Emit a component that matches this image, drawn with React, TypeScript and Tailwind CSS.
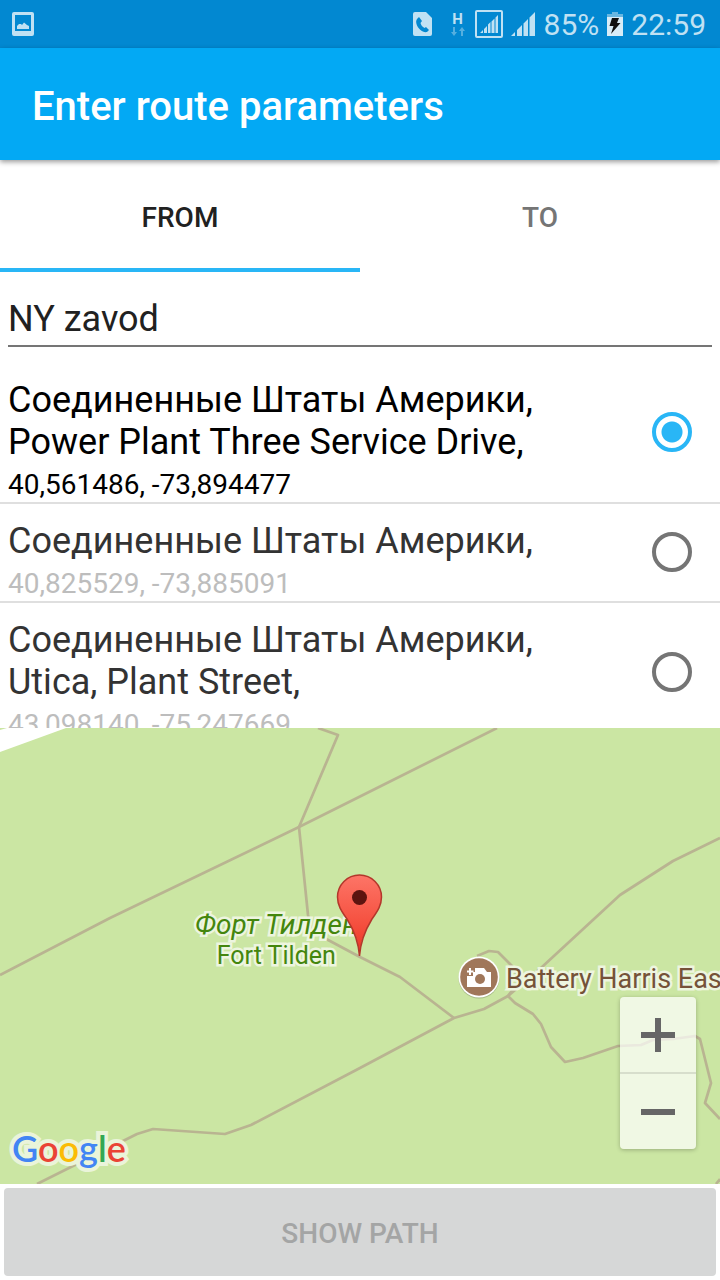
import { useState } from "react";

type Place = { lines: string[]; coords: string };

const PLACES: Place[] = [
  { lines: ["Соединенные Штаты Америки,", "Power Plant Three Service Drive,"], coords: "40,561486, -73,894477" },
  { lines: ["Соединенные Штаты Америки,"], coords: "40,825529, -73,885091" },
  { lines: ["Соединенные Штаты Америки,", "Utica, Plant Street,"], coords: "43,098140, -75,247669" },
];

function StatusBar() {
  return (
    <div className="flex h-12 shrink-0 items-center bg-[#0288d1] pr-3.5 pl-3 text-[30px] leading-none text-[#c0e1f3]">
      <svg width="22" height="24" viewBox="0 0 22 24" aria-hidden="true">
        <path fillRule="evenodd" fill="currentColor" d="M2 0h18a2 2 0 0 1 2 2v20a2 2 0 0 1-2 2H2a2 2 0 0 1-2-2V2a2 2 0 0 1 2-2zM3 3v16h16V3z" />
        <path fill="currentColor" d="M5 17v-3l2-2h2l1 1 2-2.500 3 2.500 2 1v3z" />
      </svg>
      <div className="flex-1" />
      <svg width="19" height="24" viewBox="0 0 19 24" aria-hidden="true">
        <path fill="currentColor" d="M2 0h11l6 6v16a2 2 0 0 1-2 2H2a2 2 0 0 1-2-2V2a2 2 0 0 1 2-2z" />
        <path fill="#0288d1" d="M4 7l2-2 3 4-1.500 2c.5 2 2 4 4 5l1.500-1 3 3-2 2c-4 1-9-3-10.500-8C3 10 3 8.500 4 7z" />
      </svg>
      <div className="ml-[19px] flex w-3.5 flex-col items-center">
        <span className="text-[15px] leading-[15px] font-bold">H</span>
        <svg width="14" height="9" viewBox="0 0 14 9" fill="#55afdf" aria-hidden="true">
          <path d="M2 0h2v5h2L3 9 0 5h2zM10 9h2V4h2l-3-4-3 4h2z" />
        </svg>
      </div>
      <svg className="ml-2.5" width="28" height="28" viewBox="0 0 28 28" aria-hidden="true">
        <rect x="1" y="1" width="26" height="26" rx="1" fill="none" stroke="currentColor" strokeWidth="2" />
        <path fill="currentColor" d="M5 23l3-3v3zM9 19l3-3v7H9zM13 14.500l2.500-2.500v11H13zM16.500 11.500l3-3V23h-3zM20.500 7.500l2.500-2.500v18h-2.500z" />
      </svg>
      <svg className="ml-2" width="25" height="24" viewBox="0 0 25 24" aria-hidden="true">
        <path fill="currentColor" d="M0 24l4-4v4zM6 18l5-5v11H6zM12.500 11.500L17 7v17h-4.500zM18.500 5.500L24 0v24h-5.500z" />
      </svg>
      <span className="ml-2 pt-0.5">85%</span>
      <svg className="ml-2" width="16" height="24" viewBox="0 0 16 24" aria-hidden="true">
        <path fill="#68b7e1" d="M5 0h6v2h5v3H0V2h5z" />
        <path fill="#d8ecf7" d="M0 5h16v19H0z" />
        <path fill="#111" d="M5 6h7l-2 5h3.500L4 22l2.500-8H2.500z" />
      </svg>
      <span className="ml-2 pt-0.5">22:59</span>
    </div>
  );
}

function MapView() {
  return (
    <section aria-label="Map" className="relative min-h-0 flex-1 overflow-hidden bg-[#cbe6a3]">
      <svg className="block h-full w-full" viewBox="0 0 720 456" preserveAspectRatio="xMidYMid slice" aria-hidden="true">
        <path fill="#fff" d="M0 2L7 0h59L0 24z" />
        <g fill="none" stroke="#b9b491" strokeWidth="2.700" strokeLinejoin="round">
          <path d="M0 247L110 190 299 99 381 58 497 0" />
          <path d="M318 0L338 7 299 99 308 187 311 203 330 213 360 229 400 249 454 290" />
          <path d="M37 456L137 406 153 401 225 406 251 397 360 340 454 290 484 281 508 268 542 239 620 167 673 133 720 110" />
          <path d="M477 228L489 223 498 224 512 238 520 252 508 268 515 275 533 286 541 296 551 319 565 334 583 330 618 318 641 317 653 312 673 311 695 308 700 311 711 355 705 375 720 391" />
          <path d="M716 456L720 451" />
        </g>
      </svg>

      <div className="absolute top-[182px] left-[195px] flex flex-col items-center whitespace-nowrap text-[#44860d] [-webkit-text-stroke:5px_#edf5df] [paint-order:stroke_fill]">
        <span className="text-[28px] leading-[30px] italic">Форт Тилден</span>
        <span className="text-[25px] leading-[32px]">Fort Tilden</span>
      </div>

      <svg className="absolute top-[146px] left-[336px]" width="47" height="84" viewBox="0 0 47 84" aria-hidden="true">
        <defs>
          <linearGradient id="pin" x1="0" y1="0" x2="0" y2="1">
            <stop offset="0" stopColor="#fd7567" />
            <stop offset="0.600" stopColor="#f5503f" />
            <stop offset="1" stopColor="#ea3324" />
          </linearGradient>
        </defs>
        <path
          fill="url(#pin)"
          stroke="#b3372b"
          strokeWidth="1.500"
          d="M23.500 82C22.500 68 19 58 11 45 5 36.500 1.500 31 1.500 23a22 22 0 0 1 44 0c0 8-3.500 13.500-9.500 22-8 13-11.500 23-12.500 37z"
        />
        <circle cx="23.500" cy="23.500" r="7.500" fill="#5c140f" />
      </svg>

      <div className="absolute top-[228px] left-[458px] flex items-center gap-1.5 whitespace-nowrap">
        <svg width="42" height="44" viewBox="0 0 42 44" aria-hidden="true">
          <circle cx="21" cy="22" r="20.500" fill="#8c9d72" opacity="0.600" />
          <circle cx="21" cy="21" r="20.500" fill="#fff" />
          <circle cx="21" cy="21" r="18.800" fill="#a0775a" />
          <path fill="#fff" d="M11 12h2v2.500h2.500v2H13V19h-2v-2.500H9v-2h2zM17 16v-4h9l3 4h4v15H9V20h6v-4z" />
          <circle cx="22" cy="23" r="5" fill="#a0775a" />
        </svg>
        <span className="pt-0.5 text-[27px] leading-9 text-[#755238] [-webkit-text-stroke:5px_#edf5df] [paint-order:stroke_fill]">
          Battery Harris East
        </span>
      </div>

      <div className="absolute right-6 bottom-[35px] flex w-[76px] flex-col rounded-sm bg-white/70 shadow-[0_1px_4px_rgba(0,0,0,0.25)]">
        <button type="button" aria-label="Zoom in" className="flex h-[77px] items-center justify-center border-b-2 border-black/10">
          <svg width="34" height="34" viewBox="0 0 34 34" fill="#666" aria-hidden="true">
            <path d="M14 0h6v14h14v6H20v14h-6V20H0v-6h14z" />
          </svg>
        </button>
        <button type="button" aria-label="Zoom out" className="flex h-[75px] items-center justify-center">
          <svg width="34" height="6" viewBox="0 0 34 6" fill="#666" aria-hidden="true">
            <path d="M0 0h34v6H0z" />
          </svg>
        </button>
      </div>

      <div className="absolute bottom-3.5 left-3 isolate font-[Lato,sans-serif] text-[36px] leading-[44px] font-semibold before:absolute before:inset-0 before:-z-10 before:text-[#eaf4da] before:content-['Google'] before:[-webkit-text-stroke:8px_#eaf4da]">
        <span className="text-[#4285f4]">G</span>
        <span className="text-[#ea4335]">o</span>
        <span className="text-[#fbbc05]">o</span>
        <span className="text-[#4285f4]">g</span>
        <span className="text-[#34a853]">l</span>
        <span className="text-[#ea4335]">e</span>
      </div>
    </section>
  );
}

export default function App() {
  const [tab, setTab] = useState("FROM");
  const [query, setQuery] = useState("NY zavod");
  const [selected, setSelected] = useState(0);

  return (
    <div className="flex h-screen flex-col bg-white font-[Roboto,sans-serif]">
      <StatusBar />
      <header className="relative flex h-28 shrink-0 items-center bg-[#03a9f4] px-8 pt-1.5 shadow-[0_2px_5px_rgba(0,0,0,0.4)]">
        <h1 className="text-[40px] leading-12 font-medium text-white">Enter route parameters</h1>
      </header>
      <div role="tablist" className="grid h-28 shrink-0 grid-cols-2">
        {["FROM", "TO"].map((name) => (
          <button
            key={name}
            type="button"
            role="tab"
            aria-selected={tab === name}
            onClick={() => setTab(name)}
            className={`border-b-4 pt-2 text-[28px] font-medium ${
              tab === name ? "border-[#29b6f6] text-[#212121]" : "border-transparent text-[#757575]"
            }`}
          >
            {name}
          </button>
        ))}
      </div>

      <section className="flex min-h-0 flex-1 flex-col">
        <div className="px-2 pt-5 pb-4">
          <input
            aria-label="Address"
            value={query}
            onChange={(e) => setQuery(e.target.value)}
            className="block h-[55px] w-full border-b-2 border-[#757575] text-[36px] text-[#212121] outline-none"
          />
        </div>
        <div role="radiogroup" aria-label="Places" className="min-h-0 flex-1 overflow-y-auto [scrollbar-width:none]">
          {PLACES.map((place, i) => (
            <label
              key={place.coords}
              className={`flex items-center justify-between border-b-2 border-[#dfdfdf] pt-4 pr-7 pl-2 ${
                selected === i ? "text-black" : "text-[#333]"
              }`}
            >
              <span className="flex flex-col">
                {place.lines.map((line) => (
                  <span key={line} className="text-[36px] leading-[42px]">
                    {line}
                  </span>
                ))}
                <span className={`pt-1 text-[28px] leading-[35px] ${selected === i ? "" : "text-[#bdbdbd]"}`}>{place.coords}</span>
              </span>
              <input
                type="radio"
                name="place"
                checked={selected === i}
                onChange={() => setSelected(i)}
                className="mb-4.5 size-10 shrink-0 appearance-none rounded-full border-4 border-[#757575] checked:border-[#29b6f6] checked:bg-[radial-gradient(circle,#29b6f6_10px,transparent_11px)]"
              />
            </label>
          ))}
        </div>
      </section>

      <MapView />

      <div className="flex h-24 shrink-0 p-1">
        <button type="button" disabled className="flex-1 rounded-sm bg-[#d6d7d7] pt-1 text-[28px] font-medium text-[#a4a5a5]">
          SHOW PATH
        </button>
      </div>
    </div>
  );
}
